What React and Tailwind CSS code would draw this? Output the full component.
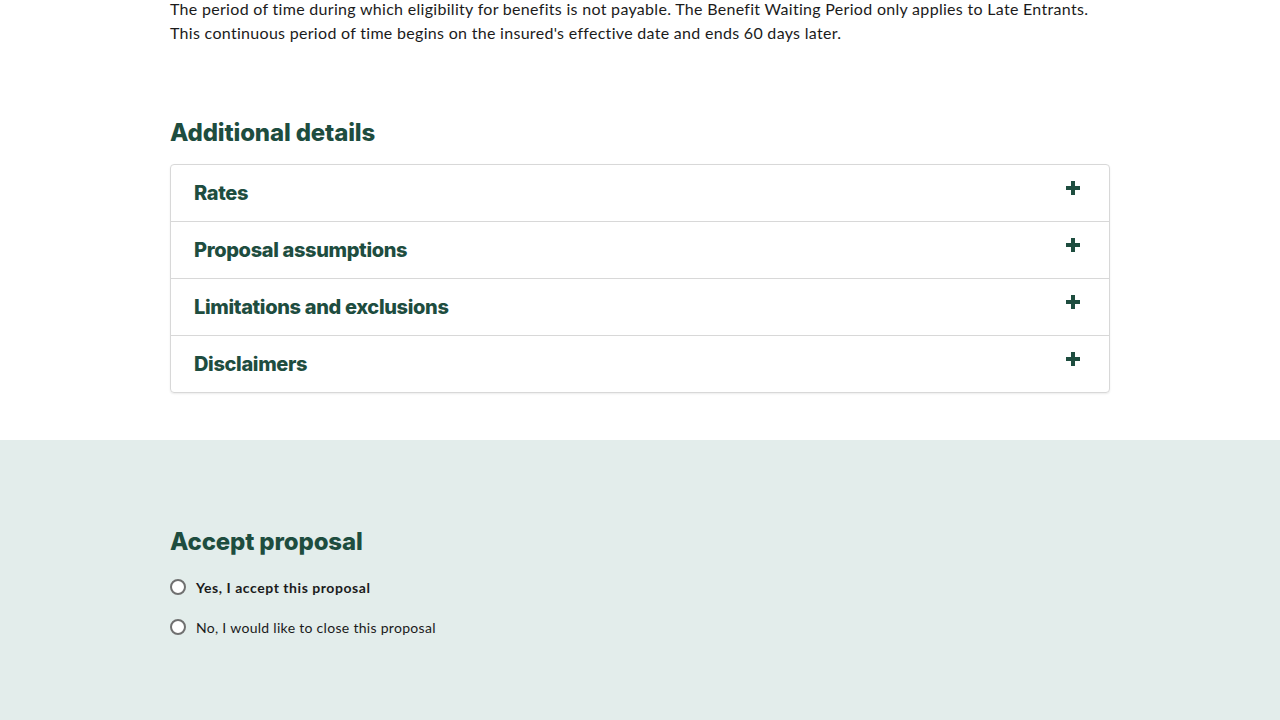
import React from "react";

const heading = { fontFamily: "Inter, Lato, 'Noto Sans', sans-serif" };
const body = { fontFamily: "Lato, 'Open Sans', sans-serif" };

function Plus() {
  return (
    <svg width="14" height="14" viewBox="0 0 14 14" className="shrink-0">
      <rect x="5" y="0" width="4" height="14" fill="#1e4d3f" />
      <rect x="0" y="5" width="14" height="4" fill="#1e4d3f" />
    </svg>
  );
}

const items = ["Rates", "Proposal assumptions", "Limitations and exclusions", "Disclaimers"];

export default function App() {
  return (
    <div className="w-[1280px] h-[720px] overflow-hidden bg-white" style={body}>
      <div className="mx-auto w-[940px] pb-[47px] -mt-[3px]">
        <p className="text-[16px] leading-[24px] tracking-[0.3px] text-[#1b1b1b]">
          The period of time during which eligibility for benefits is not payable. The Benefit Waiting Period only applies to Late Entrants.
          <br />
          This continuous period of time begins on the insured's effective date and ends 60 days later.
        </p>
        <h2 className="mt-[72px] text-[24px] leading-[32px] tracking-[-0.15px] font-extrabold text-[#1e4d3f]" style={heading}>
          Additional details
        </h2>
        <div className="mt-[15px] rounded border border-[#d8d8d8] shadow-[0_1px_2px_rgba(0,0,0,0.08)]">
          {items.map((t, i) => (
            <div
              key={t}
              className={`flex items-start justify-between pl-[23px] pr-[29px] ${i < items.length - 1 ? "h-[57px] border-b border-[#d8d8d8]" : "h-[56px]"}`}
            >
              <span className="pt-[15px] text-[20px] leading-[26px] tracking-[-0.35px] font-extrabold text-[#1e4d3f]" style={heading}>
                {t}
              </span>
              <span className="pt-[16px]">
                <Plus />
              </span>
            </div>
          ))}
        </div>
      </div>
      <div className="bg-[#e3edeb] h-[280px]">
        <div className="mx-auto w-[940px] pt-[86px]">
          <h2 className="text-[24px] leading-[32px] tracking-[-0.15px] font-extrabold text-[#1e4d3f]" style={heading}>
            Accept proposal
          </h2>
          <div className="mt-[21px] flex flex-col gap-[24px]">
            <label className="flex items-center gap-[10px] h-[16px]">
              <span className="w-4 h-4 rounded-full border-2 border-[#707070] bg-white" />
              <span className="text-[14px] tracking-[0.55px] font-bold text-[#1b1b1b]">Yes, I accept this proposal</span>
            </label>
            <label className="flex items-center gap-[10px] h-[16px]">
              <span className="w-4 h-4 rounded-full border-2 border-[#707070] bg-white" />
              <span className="text-[14px] tracking-[0.3px] text-[#1b1b1b]">No, I would like to close this proposal</span>
            </label>
          </div>
        </div>
      </div>
    </div>
  );
}
